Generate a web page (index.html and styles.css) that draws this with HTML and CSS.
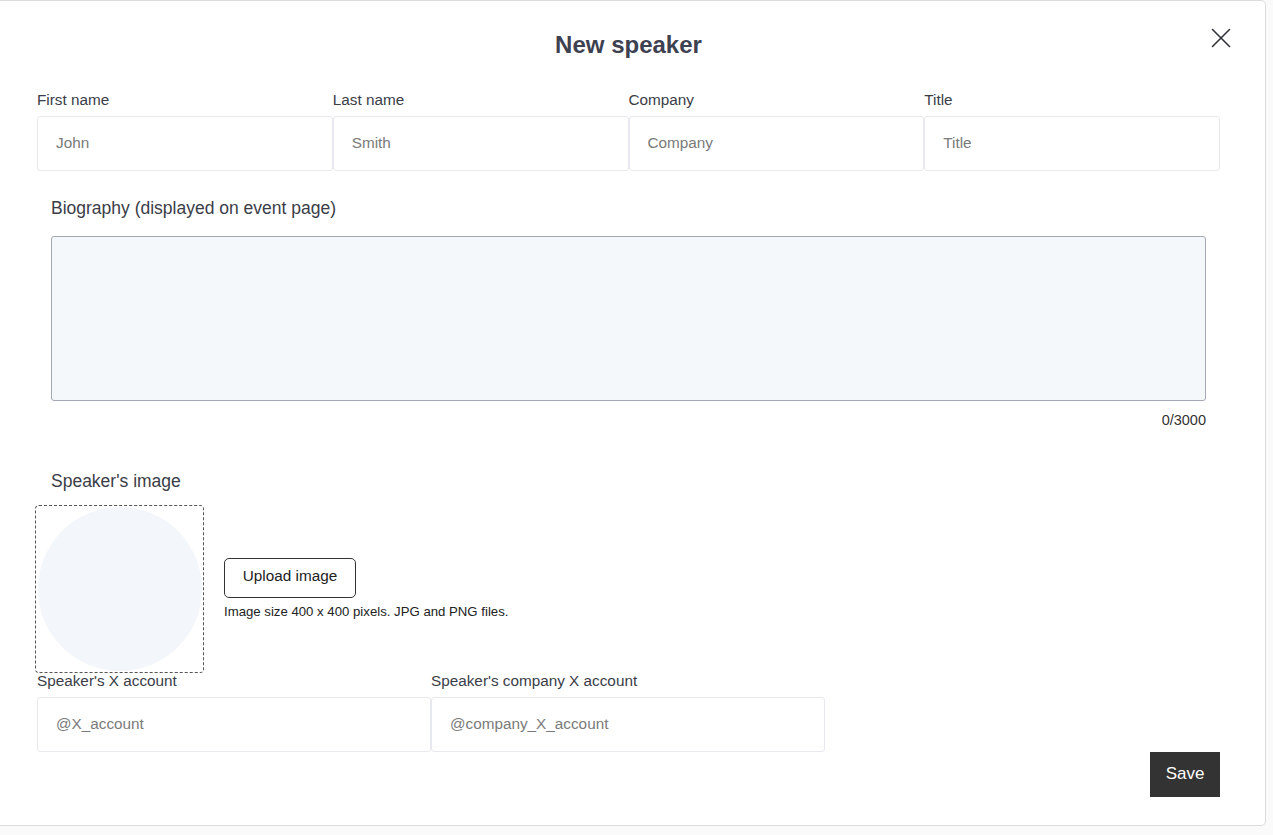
FILE: index.html
```html
<!DOCTYPE html>
<html>
<head>
<meta charset="utf-8">
<link rel="stylesheet" href="styles.css">
</head>
<body>
<div class="modal">
  <h1 class="title">New speaker</h1>
  <button class="close" aria-label="Close">
    <svg width="20" height="20" viewBox="0 0 20 20"><path d="M1.5 1.5 L18.5 18.5 M18.5 1.5 L1.5 18.5" stroke="#2f3238" stroke-width="1.6" fill="none" stroke-linecap="round"/></svg>
  </button>

  <div class="row four">
    <div class="field"><label>First name</label><input placeholder="John"></div>
    <div class="field"><label>Last name</label><input placeholder="Smith"></div>
    <div class="field"><label>Company</label><input placeholder="Company"></div>
    <div class="field"><label>Title</label><input placeholder="Title"></div>
  </div>

  <div class="bio">
    <div class="big-label">Biography (displayed on event page)</div>
    <textarea class="bio-text"></textarea>
    <div class="counter">0/3000</div>
    <div class="big-label img-label">Speaker's image</div>
  </div>

  <div class="image-row">
    <div class="drop"><div class="circle"></div></div>
    <div class="upload">
      <button class="upload-btn">Upload image</button>
      <div class="hint">Image size 400 x 400 pixels. JPG and PNG files.</div>
    </div>
  </div>

  <div class="row two">
    <div class="field"><label>Speaker's X account</label><input placeholder="@X_account"></div>
    <div class="field"><label>Speaker's company X account</label><input placeholder="@company_X_account"></div>
  </div>

  <div class="actions"><button class="save">Save</button></div>
</div>
</body>
</html>
```

FILE: styles.css
```css
html, body {
  margin: 0;
  padding: 0;
  background: #fafafa;
  font-family: "Liberation Sans", Arial, Helvetica, sans-serif;
  color: #3a3d47;
}
.modal {
  position: relative;
  box-sizing: border-box;
  width: 1266px;
  height: 826px;
  background: #fff;
  border: 1px solid #dcdcdc;
  border-left: none;
  border-radius: 0 5px 5px 0;
  padding: 30px 45px 0 37px;
}
.title {
  margin: 0;
  font-size: 24px;
  line-height: 28px;
  font-weight: bold;
  text-align: center;
  color: #3d4150;
}
.close {
  position: absolute;
  top: 27px;
  right: 34px;
  width: 20px;
  height: 20px;
  padding: 0;
  border: none;
  background: none;
}
.close svg { display: block; }
.row {
  display: grid;
}
.four {
  margin-top: 32px;
  grid-template-columns: repeat(4, 1fr);
}
.two {
  margin-top: -1px;
  grid-template-columns: 394px 394px;
}
.field label {
  display: block;
  font-size: 15.3px;
  line-height: 18px;
  margin-bottom: 7px;
  color: #3a3d47;
}
.field input {
  display: block;
  box-sizing: border-box;
  width: 100%;
  height: 55px;
  margin: 0;
  border: 1px solid #e7e9ee;
  border-radius: 3px;
  padding: 0 18px 2px;
  font-family: inherit;
  font-size: 15.3px;
  color: #333;
  background: #fff;
  outline: none;
}
.field input::placeholder { color: #7a7a7a; }
.bio {
  padding: 0 14px;
}
.big-label {
  font-size: 17.5px;
  line-height: 20px;
  color: #3a3d47;
}
.bio .big-label:first-child { margin-top: 27px; }
.bio-text {
  display: block;
  box-sizing: border-box;
  width: 100%;
  height: 165px;
  margin-top: 18px;
  background: #f5f8fb;
  border: 1px solid #a3a8b2;
  border-radius: 3px;
  resize: none;
  outline: none;
}
.counter {
  margin-top: 11px;
  text-align: right;
  font-size: 14.5px;
  line-height: 17px;
  color: #333;
}
.img-label { margin-top: 42px; }
.image-row {
  display: flex;
  align-items: flex-start;
  margin-top: 14px;
  margin-left: -2px;
}
.drop {
  box-sizing: border-box;
  width: 169px;
  height: 168px;
  border: 1px dashed #555;
  border-radius: 4px;
  display: flex;
  align-items: center;
  justify-content: center;
  flex: none;
}
.circle {
  width: 164px;
  height: 164px;
  border-radius: 50%;
  background: #f3f7fb;
}
.upload {
  margin-left: 20px;
  margin-top: 53px;
}
.upload-btn {
  display: block;
  box-sizing: border-box;
  width: 132px;
  height: 40px;
  border: 1px solid #333;
  border-radius: 5px;
  background: #fff;
  font-family: inherit;
  font-size: 15.3px;
  color: #222;
  padding: 0 0 4px;
}
.hint {
  margin-top: 6px;
  font-size: 13.2px;
  line-height: 16px;
  color: #222;
}
.actions {
  display: flex;
  justify-content: flex-end;
  margin-top: 0;
}
.save {
  width: 70px;
  height: 45px;
  background: #333;
  color: #fff;
  border: none;
  border-radius: 0;
  font-family: inherit;
  font-size: 17px;
  padding: 0 0 1px;
}
```
